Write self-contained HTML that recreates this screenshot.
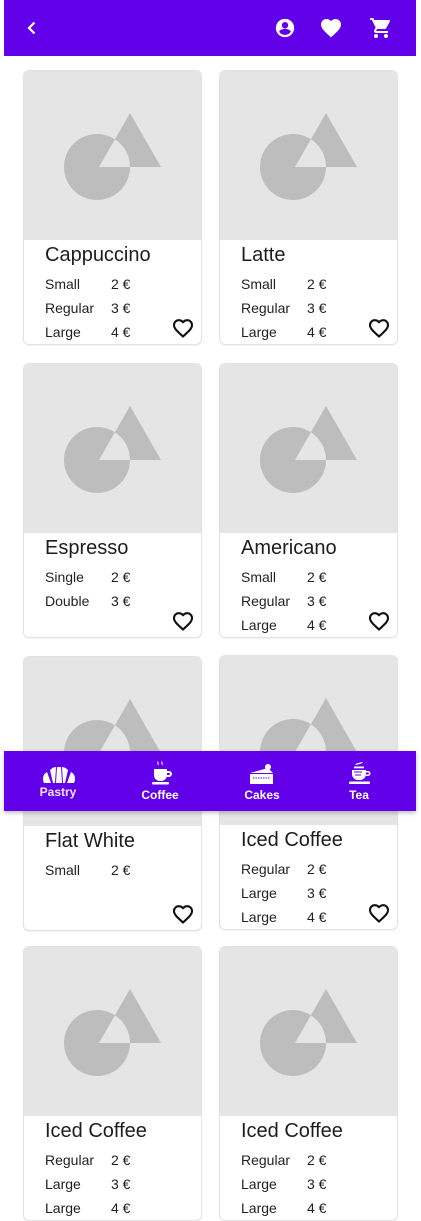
<!DOCTYPE html>
<html><head><meta charset="utf-8">
<style>
*{margin:0;padding:0;box-sizing:border-box}
body{width:421px;height:1221px;background:#fff;position:relative;overflow:hidden;font-family:"Liberation Sans",Roboto,sans-serif;color:#222}
.bar{position:absolute;left:4px;width:412px;background:#6200ea}
.card{position:absolute;width:177px;height:273px;border-radius:5px;background:#fff;box-shadow:0 0 0 1px #e2e2e2,0 1px 2px rgba(0,0,0,.12);overflow:hidden}
.img{position:absolute;left:0;top:0;width:177px;height:169px;background:#e5e5e5}
.t{position:absolute;left:21px;top:172px;font-size:20px;line-height:24px;color:#1d1d1d}
.r{position:absolute;left:21px;font-size:14px;line-height:16px;color:#222}
.p{position:absolute;left:87px;font-size:14px;line-height:16px;color:#222}
.h{position:absolute;left:148px;top:246px}
.nl{position:absolute;color:#fff;font-size:12px;font-weight:bold;text-align:center;width:60px}
</style></head><body>
<svg width="0" height="0" style="position:absolute"><defs>
<clipPath id="cc"><circle cx="73" cy="96" r="33"/></clipPath>
<g id="ph"><circle cx="73" cy="96" r="33" fill="#bdbdbd"/><polygon points="106,42 137,96 75,96" fill="#bdbdbd"/><polygon points="106,42 137,96 75,96" fill="#e5e5e5" clip-path="url(#cc)"/></g>
<path id="ht" d="M11 19.5l-1.3-1.2C5 14.1 2 11.4 2 8 2 5.3 4.1 3.2 6.8 3.2c1.5 0 3 .7 4.2 1.9 1.2-1.2 2.7-1.9 4.2-1.9 2.7 0 4.8 2.1 4.8 4.8 0 3.4-3 6.1-7.7 10.3z" fill="none" stroke="#111" stroke-width="2.1"/>
</defs></svg>

<div class="bar" style="top:0;height:56px"></div>
<svg style="position:absolute;left:22px;top:18px" width="20" height="20" viewBox="0 0 20 20"><path d="M12.5 4.5L7 10l5.5 5.5" fill="none" stroke="#fff" stroke-width="2.2"/></svg>
<svg style="position:absolute;left:274px;top:17px" width="22" height="22" viewBox="0 0 24 24"><path fill="#fff" d="M12 2a10 10 0 100 20 10 10 0 000-20zm0 3.5a3.5 3.5 0 110 7 3.5 3.5 0 010-7zM12 19.5c-2.6 0-4.9-1.3-6.3-3.3.03-2.1 4.2-3.2 6.3-3.2s6.27 1.1 6.3 3.2c-1.4 2-3.7 3.3-6.3 3.3z"/></svg>
<svg style="position:absolute;left:319px;top:16px" width="24" height="24" viewBox="0 0 24 24"><path fill="#fff" d="M12 21.35l-1.45-1.32C5.4 15.36 2 12.28 2 8.5 2 5.42 4.42 3 7.5 3c1.74 0 3.410.81 4.5 2.09C13.09 3.81 14.76 3 16.5 3 19.58 3 22 5.420 22 8.5c0 3.78-3.4 6.86-8.55 11.54z"/></svg>
<svg style="position:absolute;left:369px;top:16px" width="24" height="24" viewBox="0 0 24 24"><path fill="#fff" d="M7 18a2 2 0 100 4 2 2 0 000-4zM1 2v2h2l3.6 7.59-1.35 2.45c-.16.28-.25.61-.25.96 0 1.1.9 2 2 2h12v-2H7.42a.25.25 0 01-.25-.25l.03-.12.9-1.63h7.45c.75 0 1.41-.41 1.750-1.03l3.58-6.49A1 1 0 0020 4H5.21l-.94-2zm16 16a2 2 0 100 4 2 2 0 000-4z"/></svg>

<div class="card" style="left:24px;top:71px"><div class="img"><svg width="177" height="169"><use href="#ph"/></svg></div>
<div class="t">Cappuccino</div>
<div class="r" style="top:205px">Small</div><div class="p" style="top:205px">2 €</div>
<div class="r" style="top:229px">Regular</div><div class="p" style="top:229px">3 €</div>
<div class="r" style="top:253px">Large</div><div class="p" style="top:253px">4 €</div>
<svg class="h" width="22" height="22" viewBox="0 0 22 22"><use href="#ht"/></svg></div>

<div class="card" style="left:220px;top:71px"><div class="img"><svg width="177" height="169"><use href="#ph"/></svg></div>
<div class="t">Latte</div>
<div class="r" style="top:205px">Small</div><div class="p" style="top:205px">2 €</div>
<div class="r" style="top:229px">Regular</div><div class="p" style="top:229px">3 €</div>
<div class="r" style="top:253px">Large</div><div class="p" style="top:253px">4 €</div>
<svg class="h" width="22" height="22" viewBox="0 0 22 22"><use href="#ht"/></svg></div>

<div class="card" style="left:24px;top:364px"><div class="img"><svg width="177" height="169"><use href="#ph"/></svg></div>
<div class="t">Espresso</div>
<div class="r" style="top:205px">Single</div><div class="p" style="top:205px">2 €</div>
<div class="r" style="top:229px">Double</div><div class="p" style="top:229px">3 €</div>
<svg class="h" width="22" height="22" viewBox="0 0 22 22"><use href="#ht"/></svg></div>

<div class="card" style="left:220px;top:364px"><div class="img"><svg width="177" height="169"><use href="#ph"/></svg></div>
<div class="t">Americano</div>
<div class="r" style="top:205px">Small</div><div class="p" style="top:205px">2 €</div>
<div class="r" style="top:229px">Regular</div><div class="p" style="top:229px">3 €</div>
<div class="r" style="top:253px">Large</div><div class="p" style="top:253px">4 €</div>
<svg class="h" width="22" height="22" viewBox="0 0 22 22"><use href="#ht"/></svg></div>

<div class="card" style="left:24px;top:657px"><div class="img"><svg width="177" height="169"><use href="#ph"/></svg></div>
<div class="t">Flat White</div>
<div class="r" style="top:205px">Small</div><div class="p" style="top:205px">2 €</div>
<svg class="h" width="22" height="22" viewBox="0 0 22 22"><use href="#ht"/></svg></div>

<div class="card" style="left:220px;top:656px"><div class="img"><svg width="177" height="169"><use href="#ph"/></svg></div>
<div class="t">Iced Coffee</div>
<div class="r" style="top:205px">Regular</div><div class="p" style="top:205px">2 €</div>
<div class="r" style="top:229px">Large</div><div class="p" style="top:229px">3 €</div>
<div class="r" style="top:253px">Large</div><div class="p" style="top:253px">4 €</div>
<svg class="h" width="22" height="22" viewBox="0 0 22 22"><use href="#ht"/></svg></div>

<div class="card" style="left:24px;top:947px"><div class="img"><svg width="177" height="169"><use href="#ph"/></svg></div>
<div class="t">Iced Coffee</div>
<div class="r" style="top:205px">Regular</div><div class="p" style="top:205px">2 €</div>
<div class="r" style="top:229px">Large</div><div class="p" style="top:229px">3 €</div>
<div class="r" style="top:253px">Large</div><div class="p" style="top:253px">4 €</div></div>

<div class="card" style="left:220px;top:947px"><div class="img"><svg width="177" height="169"><use href="#ph"/></svg></div>
<div class="t">Iced Coffee</div>
<div class="r" style="top:205px">Regular</div><div class="p" style="top:205px">2 €</div>
<div class="r" style="top:229px">Large</div><div class="p" style="top:229px">3 €</div>
<div class="r" style="top:253px">Large</div><div class="p" style="top:253px">4 €</div></div>

<div class="bar" style="top:751px;height:60px;box-shadow:0 2px 4px rgba(0,0,0,.25)"></div>
<svg style="position:absolute;left:41px;top:763px" width="36" height="22" viewBox="0 0 36 22"><g fill="#fff"><path d="M3 20c-2-4-1-9 3-11l4 11z"/><path d="M9 7c2-2 4-3 6-3l-1 16h-2z"/><path d="M16 4h4l1 16h-6z"/><path d="M21 4c2 0 4 1 6 3l-3 13h-2z"/><path d="M33 20c2-4 1-9-3-11l-4 11z"/></g></svg>
<div class="nl" style="left:28px;top:785px;color:#f3e5ff">Pastry</div>
<svg style="position:absolute;left:149px;top:760px" width="26" height="26" viewBox="0 0 26 26"><g fill="#fff"><path d="M5 9h13v6a6 6 0 01-6 6h-1a6 6 0 01-6-6z"/><path d="M18 11h2a3 3 0 010 6h-2v-2h2a1 1 0 000-2h-2z"/><rect x="3" y="22" width="17" height="2.5" rx="1"/></g><path d="M9 1.5c-1 1 1 2 0 3.5M13 1.5c-1 1 1 2 0 3.5" stroke="#fff" fill="none" stroke-width="1"/></svg>
<div class="nl" style="left:130px;top:788px">Coffee</div>
<svg style="position:absolute;left:248px;top:762px" width="28" height="24" viewBox="0 0 28 24"><g fill="#fff"><circle cx="20" cy="5" r="3"/><path d="M2 11L20 6l5 5z"/><rect x="2" y="12" width="23" height="10"/></g><path d="M5 16h17" stroke="#6200ea" stroke-width="1" stroke-dasharray="1.5 1"/></svg>
<div class="nl" style="left:232px;top:788px">Cakes</div>
<svg style="position:absolute;left:346px;top:760px" width="28" height="26" viewBox="0 0 28 26"><g fill="#fff"><path d="M6 10h14v4a6 6 0 01-6 6h-2a6 6 0 01-6-6z"/><path d="M20 11h2a2.5 2.5 0 010 5h-2v-1.5h2a1 1 0 000-2h-2z"/><rect x="3" y="21.5" width="21" height="2.5" rx="1"/><rect x="8" y="6.5" width="10" height="1.8"/></g><path d="M10 5c0-2 6-1 6-3" stroke="#fff" fill="none" stroke-width="1.3"/><path d="M8 12h8M9 15h6" stroke="#6200ea" stroke-width="1"/></svg>
<div class="nl" style="left:329px;top:788px">Tea</div>
</body></html>
